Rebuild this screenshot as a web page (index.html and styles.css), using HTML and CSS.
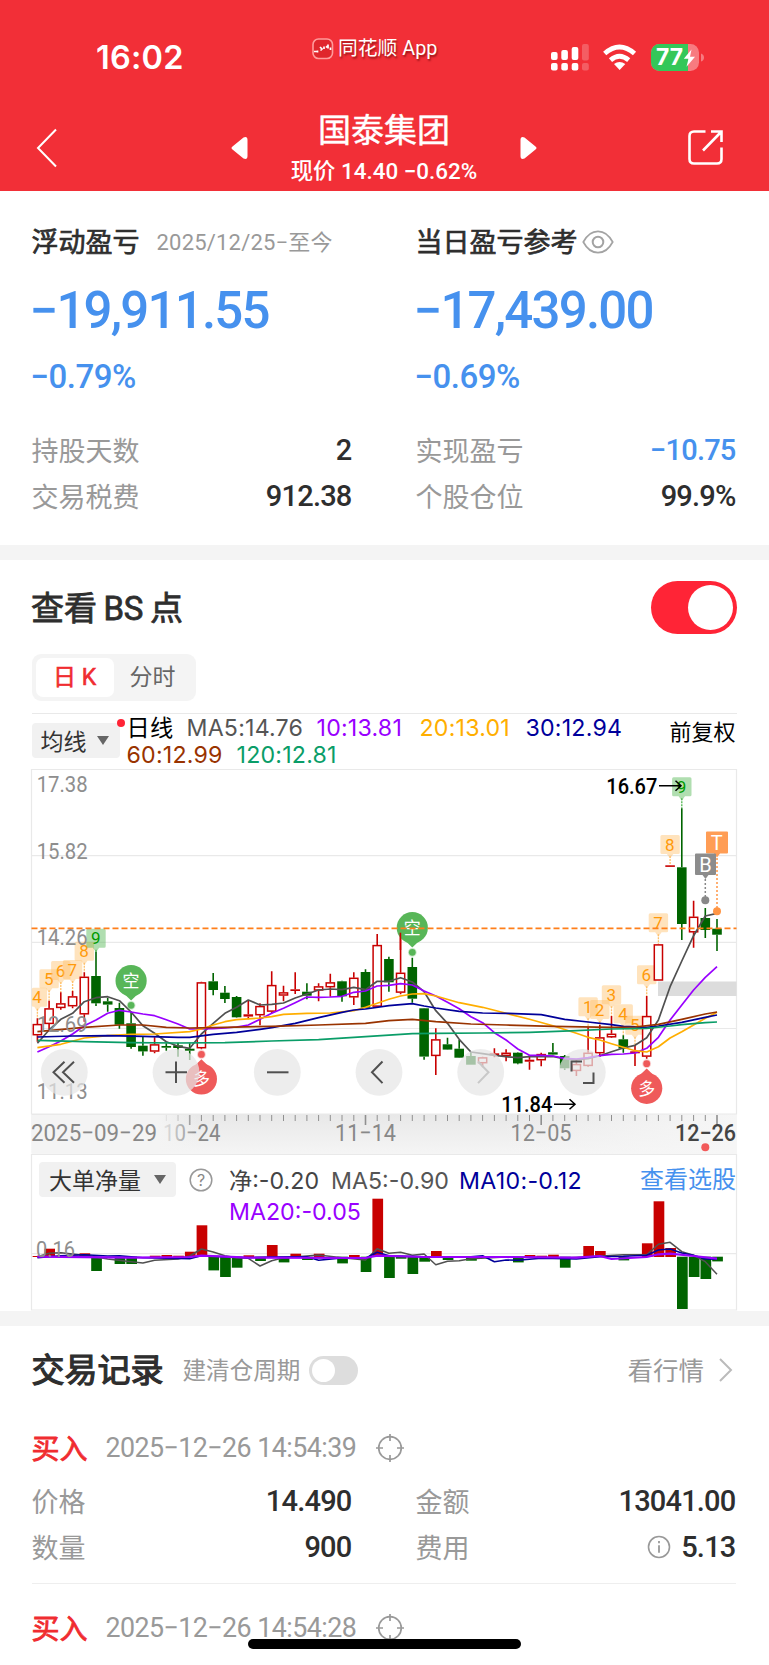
FILE: index.html
```html
<!DOCTYPE html>
<html lang="zh-CN">
<head>
<meta charset="utf-8">
<title>国泰集团</title>
<link rel="stylesheet" href="styles.css">
</head>
<body>
<header class="top">
  <div class="status">
    <div class="clock">16:02</div>
    <div class="brand">
      <svg width="22" height="22" viewBox="0 0 22 22"><rect x="1" y="1" width="19.5" height="19.5" rx="5.5" fill="#e0262c" stroke="#ff9b9b" stroke-width="1.6"/><path d="M2 13.5h3M5.5 12.5v2M8 9l2 2-1.500 1.500M12 8.500v2.500M14 9.500l1.500-1.500M16 6.500v4M18.500 9.500v2.500" stroke="#fff" stroke-width="1.700" fill="none"/></svg>
      <span>同花顺 App</span>
    </div>
    <svg class="signals" width="156" height="30" viewBox="550 43 156 30">
      <g fill="#fff"><rect x="551" y="52" width="6.600" height="8" rx="2"/><rect x="561.300" y="50" width="6.600" height="10" rx="2"/><rect x="571.700" y="47" width="6.600" height="13" rx="2"/><rect x="551" y="63" width="6.600" height="7.600" rx="2"/><rect x="561.300" y="63" width="6.600" height="7.600" rx="2"/><rect x="571.700" y="63" width="6.600" height="7.600" rx="2"/></g>
      <g fill="#fff" opacity=".22"><rect x="582" y="44" width="6.800" height="16.500" rx="2"/><rect x="582" y="63" width="6.800" height="7.600" rx="2"/></g>
      <g fill="none" stroke="#fff" stroke-width="4.800"><path d="M604.700 53.500Q619.500 40.500 634.500 53.500"/><path d="M610.500 60.100Q619.500 52.300 628.700 60.100"/></g>
      <path d="M614 64q5.500-4.200 11.300 0l-5.700 6z" fill="#fff"/>
      <rect x="651" y="44" width="48" height="27" rx="8.500" fill="#f77b80"/>
      <path d="M659.500 44H688v27h-28.500a8.500 8.500 0 0 1-8.500-8.500v-10a8.500 8.500 0 0 1 8.500-8.500z" fill="#34c759"/>
      <path d="M701 53.500q3 1 3 4t-3 4z" fill="#f77b80"/>
      <text x="656" y="65" class="batt" textLength="27" lengthAdjust="spacingAndGlyphs">77</text>
      <path d="M691.500 49.500l-7.700 9.300h4.700l-2 8 8.500-10h-5z" fill="#fff"/>
    </svg>
  </div>
  <div class="nav">
    <svg class="back" width="24" height="42" viewBox="0 0 24 42"><path d="M21 2.500L3 21l18 18.500" fill="none" stroke="#fff" stroke-width="2"/></svg>
    <svg width="17" height="24" viewBox="0 0 17 24"><path d="M1.500 10.500L12.500 1.500Q16.500 0 16.500 4v16q0 4-4 2.500L1.500 13.500q-2-1.500 0-3z" fill="#fff"/></svg>
    <div class="stock"><h1>国泰集团</h1><p>现价 14.40 −0.62%</p></div>
    <svg width="17" height="24" viewBox="0 0 17 24"><path d="M15.500 10.500L4.500 1.500Q.5 0 .5 4v16q0 4 4 2.500L15.500 13.500q2-1.500 0-3z" fill="#fff"/></svg>
    <svg class="share" width="38" height="38" viewBox="0 0 38 38"><path d="M18.500 2.500H7q-4.500 0-4.500 4.500v23q0 4.500 4.500 4.500h23q4.500 0 4.500-4.500V18.500M24 2.500h10.500V13M34 3L16 21.500" fill="none" stroke="#fff" stroke-width="2.600"/></svg>
  </div>
</header>

<section class="summary">
  <div class="col">
    <div class="head"><h2>浮动盈亏</h2><span class="range">2025/12/25−至今</span></div>
    <div class="amount">−19,911.55</div>
    <div class="percent">−0.79%</div>
    <div class="row"><span>持股天数</span><b>2</b></div>
    <div class="row"><span>交易税费</span><b>912.38</b></div>
  </div>
  <div class="col">
    <div class="head"><h2>当日盈亏参考</h2><svg width="32" height="24" viewBox="0 0 32 24" fill="none" stroke="#a3a3a3" stroke-width="1.700"><path d="M1.300 12Q7 1.300 16 1.300T30.700 12Q25 22.700 16 22.700T1.300 12z"/><circle cx="16" cy="12" r="5.300" stroke-width="2"/></svg></div>
    <div class="amount">−17,439.00</div>
    <div class="percent">−0.69%</div>
    <div class="row"><span>实现盈亏</span><b class="blue">−10.75</b></div>
    <div class="row"><span>个股仓位</span><b>99.9%</b></div>
  </div>
</section>

<section class="bs">
  <div class="bs-head"><h2>查看 BS 点</h2><span class="switch on"><i></i></span></div>
  <div class="tabs"><span class="active">日 K</span><span>分时</span></div>
  <div class="legend">
    <div class="picker">均线<i></i><em></em></div>
    <div class="values">
      <div><span class="k0">日线</span><span class="k1">MA5:14.76</span><span class="k2">10:13.81</span><span class="k3">20:13.01</span><span class="k4">30:12.94</span></div>
      <div><span class="k5">60:12.99</span><span class="k6">120:12.81</span></div>
    </div>
    <div class="adjust">前复权</div>
  </div>
  <svg id="kline" class="kline" width="769" height="385" viewBox="0 769 769 385"></svg>
  <div class="volume">
    <svg id="flow" class="flow" width="769" height="157" viewBox="0 1154 769 157"></svg>
    <div class="flow-legend">
      <div class="picker wide">大单净量<i></i></div>
      <svg width="24" height="24" viewBox="0 0 24 24"><circle cx="12" cy="12" r="10.800" fill="none" stroke="#999" stroke-width="1.500"/><text x="12" y="17.500" class="q">?</text></svg>
      <div class="values">
        <div><span class="f1">净:-0.20</span><span class="f2">MA5:-0.90</span><span class="f3">MA10:-0.12</span></div>
        <div><span class="f4">MA20:-0.05</span></div>
      </div>
      <a>查看选股</a>
    </div>
  </div>
</section>

<section class="records">
  <div class="rec-head"><h2>交易记录</h2><span class="cycle">建清仓周期</span><span class="switch off"><i></i></span><span class="quote">看行情</span><svg width="16" height="26" viewBox="0 0 16 26"><path d="M2 2l11 11L2 24" fill="none" stroke="#bbb" stroke-width="2"/></svg></div>
  <article>
    <div class="trade"><strong>买入</strong><time>2025−12−26 14:54:39</time><svg width="30" height="30" viewBox="0 0 30 30" fill="none" stroke="#999" stroke-width="1.700"><circle cx="15" cy="15" r="11.300"/><path d="M15 1v7M15 22v7M1 15h7M22 15h7"/></svg></div>
    <div class="cells">
      <div class="row"><span>价格</span><b>14.490</b></div>
      <div class="row"><span>金额</span><b>13041.00</b></div>
      <div class="row"><span>数量</span><b>900</b></div>
      <div class="row"><span>费用</span><b><svg width="24" height="24" viewBox="0 0 24 24"><circle cx="12" cy="12" r="10.500" fill="none" stroke="#999" stroke-width="1.600"/><path d="M12 6v2.200M12 10.200v7.500" stroke="#999" stroke-width="1.800"/></svg>5.13</b></div>
    </div>
  </article>
  <article class="next">
    <div class="trade"><strong>买入</strong><time>2025−12−26 14:54:28</time><svg width="30" height="30" viewBox="0 0 30 30" fill="none" stroke="#999" stroke-width="1.700"><circle cx="15" cy="15" r="11.300"/><path d="M15 1v7M15 22v7M1 15h7M22 15h7"/></svg></div>
  </article>
</section>
<div class="home"></div>
<script src="chart.js"></script>
</body>
</html>
```

FILE: styles.css
```css
* { box-sizing: border-box; }
body { margin: 0; width: 769px; height: 1665px; overflow: hidden; position: relative; background: #fff; color: #2e2e2e; font-family: Roboto, "Noto Sans CJK SC", sans-serif; }
h1, h2, p { margin: 0; font-weight: 400; }
svg { display: block; flex: none; }
i, em { font-style: normal; }
.top { height: 191px; background: #f22f37; color: #fff; }
.status { height: 100px; position: relative; }
.clock { position: absolute; left: 96px; top: 38px; font: 600 32.5px/40px Inter, sans-serif; letter-spacing: .2px; }
.brand { position: absolute; left: 312px; top: 37px; display: flex; align-items: center; gap: 4px; font-size: 19.8px; line-height: 24px; white-space: nowrap; }
.brand span { text-shadow: 1px 2px 2px rgba(90, 0, 0, .6); }
.signals { position: absolute; left: 550px; top: 43px; }
.batt { font: 700 23px Inter, sans-serif; fill: #fff; }
.nav { height: 91px; display: flex; align-items: center; padding: 4px 44px 0 35px; }
.back { margin-right: 172px; }
.stock { width: 272px; display: flex; flex-direction: column; align-items: center; white-space: nowrap; }
.stock h1 { font-size: 33px; line-height: 40px; margin-top: 2px; -webkit-text-stroke: .4px #fff; }
.stock p { font-size: 22.4px; line-height: 32px; margin-top: 4px; font-weight: 500; }
.share { margin-left: auto; }

.summary { height: 354px; display: flex; padding: 28px 33px 0 31.5px; gap: 64px; }
.col { width: 320px; }
.head { height: 45px; display: flex; align-items: center; white-space: nowrap; }
.head h2 { font-size: 27px; line-height: 45px; padding-top: 3px; -webkit-text-stroke: .7px #2e2e2e; }
.range { margin: -3px 0 0 17px; font-size: 22px; color: #999; letter-spacing: .2px; }
.head svg { margin-left: 4px; }
.amount { font-size: 51px; line-height: 60px; margin: 17px 0 0 -2px; font-weight: 500; color: #4691ee; letter-spacing: -1.8px; white-space: nowrap; }
.percent { font-size: 33px; line-height: 40px; margin: 16px 0 29px -1px; font-weight: 500; color: #4691ee; letter-spacing: -.5px; }
.row { height: 46px; display: flex; justify-content: space-between; align-items: center; font-size: 27px; color: #999; }
.row b { display: flex; align-items: center; gap: 10px; padding-top: 2px; font-size: 29px; font-weight: 500; color: #2e2e2e; letter-spacing: -.8px; }
.row b.blue { color: #4691ee; }

.bs { border-top: 15px solid #f4f4f4; border-bottom: 15px solid #f4f4f4; height: 781px; }
.bs-head { height: 95px; display: flex; justify-content: space-between; align-items: center; padding: 0 32px 0 31px; }
.bs-head h2 { font-size: 33px; padding-bottom: 4px; -webkit-text-stroke: .8px #2e2e2e; letter-spacing: -.1px; word-spacing: -1.5px; }
.switch { display: block; flex: none; padding: 4px; border-radius: 40px; }
.switch i { display: block; border-radius: 50%; background: #fff; }
.on { width: 86px; height: 53px; background: #ff2436; }
.on i { width: 45px; height: 45px; margin-left: 33px; }
.off { width: 49px; height: 29px; background: #ddd; padding: 3px; }
.off i { width: 23px; height: 23px; }
.tabs { width: 164px; height: 47px; margin: -1px 0 0 31.5px; padding: 4px; border-radius: 9px; background: #f4f4f4; display: flex; font-size: 23px; line-height: 39px; color: #666; text-align: center; }
.tabs span { width: 78px; border-radius: 7px; }
.tabs .active { background: #fff; color: #f02c30; -webkit-text-stroke: .6px #f02c30; }
.legend { margin: 12px 32px 0 31.5px; height: 56px; border-top: 1px solid #e9e9e9; display: flex; font: 23.2px/26px Inter, "Noto Sans CJK SC", sans-serif; letter-spacing: .2px; white-space: nowrap; }
.picker { position: relative; flex: none; width: 88px; height: 35px; margin-top: 9px; padding: 0 11px 0 9px; border-radius: 4px; background: #f1f1f1; color: #333; display: flex; align-items: center; justify-content: space-between; font: 23px/35px "Noto Sans CJK SC", sans-serif; letter-spacing: 0; }
.picker i { border: 6px solid transparent; border-top: 9px solid #666; border-bottom: 0; }
.picker em { position: absolute; right: -5px; top: -4px; width: 8px; height: 8px; border-radius: 50%; background: #ff2436; }
.legend .values { flex: none; width: 550px; padding-left: 7px; }
.values div { height: 27px; display: flex; align-items: center; }
.values span { flex: none; }
.k0 { width: 60px; color: #000; }
.k1 { width: 130px; color: #555; }
.k2 { width: 103px; color: #90f; }
.k3 { width: 106px; color: #ffae00; }
.k4 { color: #00009b; }
.k5 { width: 110px; color: #993300; }
.k6 { color: #0a9d68; }
.adjust { flex: none; color: #000; font-size: 22px; line-height: 36px; letter-spacing: 0; }
.kline { font-family: Roboto, "Noto Sans CJK SC", sans-serif; }
.volume { height: 157px; position: relative; }
.flow { position: absolute; left: 0; top: 0; font-family: Roboto, sans-serif; }
.flow-legend { position: relative; display: flex; padding: 8px 32px 0 39px; font: 23.2px/30px Inter, "Noto Sans CJK SC", sans-serif; white-space: nowrap; }
.wide { width: 137px; margin-top: 0; padding: 0 10px; }
.flow-legend > svg { margin: 6px 0 0 13px; }
.flow-legend .values { margin: 3px 0 0 16px; width: 411px; }
.flow-legend .values div { height: 31.5px; }
.f1 { width: 102px; color: #444; }
.f2 { width: 128px; color: #555; }
.f3 { color: #00009b; letter-spacing: .3px; }
.f4 { color: #90f; }
.flow-legend a { color: #4691ee; font-size: 24px; line-height: 36px; }
.q { font-size: 16px; fill: #888; text-anchor: middle; }

.records { padding: 0 33px 0 31.5px; }
.rec-head { height: 88px; display: flex; align-items: center; white-space: nowrap; color: #999; }
.rec-head h2 { font-size: 33px; padding-bottom: 4px; color: #2e2e2e; -webkit-text-stroke: 1.2px #2e2e2e; }
.cycle { font-size: 23.6px; margin: -3px 9px 0 19px; }
.quote { font-size: 25.5px; margin: -3px 14px 0 auto; }
.rec-head svg { margin-right: 2px; }
article { height: 170px; border-bottom: 1px solid #eee; }
.trade { height: 63px; padding-top: 5px; display: flex; align-items: center; white-space: nowrap; }
.trade strong { font-weight: 400; font-size: 28px; color: #f02c30; -webkit-text-stroke: .8px #f02c30; width: 74px; padding-bottom: 3px; }
.trade time { font-size: 26.8px; color: #999; width: 252px; letter-spacing: -.55px; }
.trade svg { margin-left: 17.5px; }
.cells { display: grid; grid-template-columns: 320px 320px; column-gap: 64px; }
.next { height: 82px; border: 0; padding-top: 10px; }
.home { position: absolute; left: 248px; top: 1639px; width: 273px; height: 10px; border-radius: 5px; background: #000; }

.ylab { font-size: 22.5px; fill: #8e8e8e; }
.date { font-size: 24px; fill: #888; }
.mark { font-size: 22.5px; fill: #000; font-weight: 500; }
.tag { font-size: 17px; text-anchor: middle; }
.pin { font-size: 17px; text-anchor: middle; fill: #fff; }
```

FILE: chart.js
```js
const X = i => 37.4 + 11.717 * i;
const Y = v => 760 + v / 3;
const r1 = n => n.toFixed(1);
const RED = '#c80000', GREEN = '#006400';

/* direction, high, body top, body bottom, low (third-pixels below the plot origin) */
const candles = `r 775 792 826 845|r 722 745 792 808|r 697 730 744 749|r 693 709 739 745|r 637 650 763 785|g 575 648 730 738|g 714 724 734 755|g 728 744 794 806|g 755 790 861 866|g 828 857 874 887|r 832 853 875 880|g 850 858 863 872|g 848 856 864 890|g 850 866 872 900|r 665 667 865 868|g 639 664 690 706|g 678 698 717 729|g 708 711 772 773|r 722 763 770 778|r 730 738 766 796|r 634 675 755 760|r 677 697 707 724|r 637 688 693 702|g 670 695 707 718|r 670 679 692 724|r 641 667 682 710|g 662 664 709 725|r 637 653 712 735|g 628 636 743 745|r 522 555 740 742|g 590 597 667 695|r 518 638 698 703|g 593 621 716 728|g 744 745 890 899|r 805 838 888 945|g 833 853 869 870|g 840 866 893 894|g 876 888 914 914|r 890 892 910 922|r 865 880 886 892|r 868 878 888 904|g 877 878 910 913|r 885 899 905 929|r 878 882 901 919|g 849 877 884 886|g 885 888 925 930|r 900 912 933 948|r 802 878 918 920|r 795 832 880 890|r 768 821 832 834|g 826 838 866 878|r 855 874 880 918|r 708 768 890 896|r 552 553 662 662|r 316 316 320 320|g 145 322 492 540|r 422 470 517 563|g 444 474 510 534|g 477 506 524 573`.split('|').map(s => s.split(' '));

const averages = {
  '#505050': '0:850,1:810,2:778,3:760,4:725,5:713,6:710,7:722,8:756,9:797,10:820,11:845,12:859,13:865,14:822,15:790,16:760,17:742,18:720,19:735,20:733,21:729,22:714,23:702,24:690,25:687,26:689,27:682,28:689,29:664,30:664,31:653,32:666,33:695,34:752,35:790,36:838,37:876,38:881,39:886,40:890,41:893,42:890,43:890,44:889,45:897,46:899,47:896,48:887,49:875,50:864,51:856,52:833,53:780,54:680,55:603,56:527,57:468,58:460',
  '#9900ff': '0:876,1:860,2:843,3:822,4:797,5:780,6:760,7:751,8:756,9:762,10:767,11:779,12:792,13:807,14:807,15:806,16:804,17:801,18:795,19:778,20:760,21:745,22:728,23:711,24:712,25:711,26:709,27:697,28:693,29:678,30:676,31:671,32:675,33:693,34:708,35:727,36:746,37:770,38:788,39:818,40:840,41:867,42:886,43:886,44:888,45:895,46:897,47:893,48:887,49:883,50:882,51:879,52:865,53:832,54:780,55:735,56:690,57:652,58:620',
  '#ffae00': '0:863,2:853,4:834,6:827,8:823,10:822,13:815,14:807,15:795,16:785,17:779,19:774,20:770,21:763,23:760,25:759,27:752,28:742,30:718,31:708,32:702,33:701,34:708,36:728,38:742,40:760,42:778,44:797,46:820,47:832,48:840,49:851,50:862,51:872,52:876,53:860,54:834,55:815,56:795,57:775,58:757',
  '#000099': '0:831,3:828,6:827,9:829,12:832,13:832,15:823,17:817,19:808,20:803,22:790,24:773,26:757,27:750,28:747,30:737,32:731,33:738,34:744,36:754,38:759,40:760,43:764,45:778,47:786,49:794,50:799,52:802,53:798,55:787,57:772,58:765',
  '#993300': '0:815,4:802,7:795,9:795,11:802,13:804,16:802,20:799,24:795,28:790,30:782,32:778,34:785,37:792,40:795,44:799,49:802,51:801,53:793,55:778,57:762,58:756',
  '#0a9d68': '0:841,4:845,8:848,12:849,16:848,20:843,24:839,28:830,32:821,34:820,38:819,42:817,46:812,49:807,52:805,54:798,55:794,57:788,58:786'
};

const polyline = (data, y, color, w) => {
  const pts = data.split(',').map(p => p.split(':')).map(([i, v]) => r1(X(+i)) + ',' + r1(y(+v))).join(' ');
  return `<polyline points="${pts}" fill="none" stroke="${color}" stroke-width="${w}" stroke-linejoin="round"/>`;
};
const label = (cls, x, y, w, s, extra = '') => `<text class="${cls}" x="${x}" y="${y}" textLength="${w}" lengthAdjust="spacingAndGlyphs" ${extra}>${s}</text>`;

let k = '<defs><linearGradient id="strip" x2="0" y2="1"><stop offset="0" stop-color="#e8e8e8"/><stop offset="1" stop-color="#f5f5f5"/></linearGradient><linearGradient id="shade"><stop offset="0" stop-color="#f4f4f4"/><stop offset=".76" stop-color="#f4f4f4"/><stop offset="1" stop-color="#f4f4f4" stop-opacity="0"/></linearGradient><linearGradient id="shadeR"><stop offset="0" stop-color="#f6f6f6" stop-opacity="0"/><stop offset="1" stop-color="#f6f6f6"/></linearGradient></defs>';
k += '<rect x="31.5" y="1114" width="705" height="40" fill="url(#strip)"/><rect x="500" y="1114" width="237" height="40" fill="url(#shadeR)"/><path d="M31.500 769.500H736.500V1114H31.500zM31.500 855.700H736.500M31.500 942.300H736.500M31.500 1028.500H736.500" fill="none" stroke="#e9e9e9" stroke-width="1.2"/>';
k += '<rect x="658" y="981.500" width="78.500" height="14.500" fill="#dcdcdc"/>';

/* counter tags with their pointers: index, number, top, dotted line end, colour pair */
const tags = [[0,4,683,775,'y'],[1,5,628,722,'y'],[2,6,603,697,'y'],[3,7,600,693,'y'],[4,8,545,637,'y'],[5,9,506,575,'g'],[47,1,712,802,'y'],[48,2,720,800,'y'],[49,3,676,768,'y'],[50,4,733,826,'y'],[51,5,767,855,'y'],[52,6,616,708,'y'],[53,7,460,552,'y'],[54,8,225,316,'y'],[55,9,52,145,'g']];
for (const [i, n, t, e, c] of tags) {
  const x = X(i), y = Y(t), bg = c === 'y' ? '#ffc069' : '#4cb34c', fg = c === 'y' ? '#ff9a0a' : '#009a00';
  const left = Math.max(x - 9.7, 31.8), w = x + 9.7 - left;
  k += `<path d="M${r1(left)} ${r1(y + 1.5)}q0-1.500 1.500-1.500h${r1(w - 3)}q1.500 0 1.500 1.500v16q0 1.500-1.500 1.500h-5l-3.200 4.500-3.200-4.500H${r1(left + 1.5)}q-1.500 0-1.500-1.500z" fill="${bg}" opacity=".44"/>`;
  k += `<path d="M${r1(x)} ${r1(y + 21)}V${r1(Y(e))}" stroke="${bg}" stroke-width="1.300" stroke-dasharray="2 1"/><text class="tag" x="${r1(x - .3)}" y="${r1(y + 15.7)}" fill="${fg}">${n}</text>`;
}
candles.forEach(([c, h, t, b, l], i) => {
  const col = c === 'r' ? RED : GREEN, x = X(i), top = Y(+t), bot = Y(+b);
  k += `<path d="M${r1(x)} ${r1(Y(+h))}V${r1(top)}M${r1(x)} ${r1(bot)}V${r1(Y(+l))}" stroke="${col}" stroke-width="1.600"/>`;
  if (c === 'g' || b - t < 9) k += `<rect x="${r1(x - 4.8)}" y="${r1(top)}" width="9.600" height="${r1(Math.max(1.6, bot - top))}" fill="${col}"/>`;
  else k += `<rect x="${r1(x - 4.1)}" y="${r1(top + .6)}" width="8.200" height="${r1(bot - top - 1.2)}" fill="#fff" stroke="${col}" stroke-width="1.500"/>`;
});
for (const c in averages) k += polyline(averages[c], Y, c, 1.7);

const pin = (i, cy, up, color, s) => {
  const x = X(i), y = Y(cy), d = up ? -1 : 1;
  return `<circle cx="${r1(x)}" cy="${r1(y)}" r="15.600" fill="${color}"/><path d="M${r1(x - 6.5)} ${r1(y + 13.5 * d)}L${r1(x)} ${r1(y + 19.8 * d)}L${r1(x + 6.5)} ${r1(y + 13.5 * d)}z" fill="${color}"/><circle cx="${r1(x)}" cy="${r1(y + 24.6 * d)}" r="3.400" fill="${color}" stroke="${color}" stroke-opacity=".3" stroke-width="2"/><text class="pin" x="${r1(x)}" y="${r1(y + 6.3)}">${s}</text>`;
};
k += pin(8, 662, false, '#58b658', '空') + pin(32, 503, false, '#58b658', '空') + pin(14, 957, true, '#ef5a5a', '多') + pin(52, 985, true, '#ef5a5a', '多');
k += '<path d="M31.500 928.400H736.500" stroke="#ff7f1a" stroke-width="1.600" stroke-dasharray="6 3"/><path d="M400.400 932.700V950" stroke="#c80000" stroke-width="1.600"/>';
k += '<g stroke-width="1.500" stroke-dasharray="2 2"><path d="M705.300 875V897" stroke="#888"/><path d="M717 854V909" stroke="#ff9544"/></g><circle cx="705.300" cy="900.300" r="4" fill="#888"/><circle cx="717" cy="911.300" r="4" fill="#ff9544"/>';
k += '<path d="M707 831.500h20q1 0 1 1v20q0 1-1 1h-7l-3 4-3-4h-7q-1 0-1-1v-20q0-1 1-1z" fill="#ff9d55"/><text class="pin" style="font-size:20px" x="716.800" y="850">T</text>';
k += '<path d="M696 853.500h19q1 0 1 1v19.500q0 1-1 1h-6.500l-3 4-3-4h-6.500q-1 0-1-1v-19.500q0-1 1-1z" fill="#8c8c8c"/><text class="pin" style="font-size:20px" x="705.500" y="871.500">B</text>';

[['17.38', 792], ['15.82', 858.7], ['14.26', 945], ['12.69', 1031.7], ['11.13', 1099]].forEach(([s, y]) => { k += label('ylab', 36.7, y, 51, s); });
k += label('mark', 606.3, 794, 51, '16.67') + label('mark', 501.3, 1112, 51, '11.84');
k += '<path d="M659 785.700H681M675.500 780.700L681 785.700L675.500 790.700M554 1104.300H575M569.500 1099.300L575 1104.300L569.500 1109.300" fill="none" stroke="#000" stroke-width="1.500"/>';

/* round control buttons */
const glyphs = ['M52.500 1072.300m12-10.500l-11 10.500 11 10.500M74 1061.800l-11 10.500 11 10.500', 'M165.500 1072.300h21.500M176 1061.500v21.500', 'M267 1072.300h21.500', 'M382.500 1061.500l-10.500 10.800 10.500 10.800', 'M478 1061.500l10.500 10.800-10.500 10.800', 'M571.500 1071.500v-10h10.500M583 1083h10.500v-10.500'];
[64.3, 176, 277.3, 379, 480.7, 582.3].forEach((x, i) => {
  k += `<circle cx="${x}" cy="1072.300" r="23.400" fill="#e6e6e6" opacity=".72"/><path d="${glyphs[i]}" fill="none" stroke="${i === 4 ? '#c8c8c8' : '#505050'}" stroke-width="2"/>`;
});

/* time axis */
for (let i = 11; i < 59; i++) {
  const major = (i - 13) % 15 === 0;
  k += `<path d="M${r1(X(i))} 1115v${major ? 10 : 6}" stroke="#909090" stroke-width="${major ? 1.600 : 1}"/>`;
}
k += label('date', 163, 1141, 57.500, '10−24') + '<rect x="31.500" y="1115" width="166" height="38" fill="url(#shade)"/>';
k += label('date', 31, 1141, 126, '2025−09−29') + label('date', 335, 1141, 61, '11−14') + label('date', 510.500, 1141, 61, '12−05') + label('date', 675, 1141, 61, '12−26', 'style="fill:#444;font-weight:500"');
k += '<circle cx="705.300" cy="1147.300" r="4" fill="#f25a5a"/>';
document.getElementById('kline').innerHTML = k;

/* net large-order flow */
const V = v => 1110 + v / 3;
const bars = '0:438,1:416,3:437,4:430,5:483,7:462,8:462,10:437,11:435,12:437,13:425,14:346,15:481,16:501,17:473,18:436,19:453,20:405,21:457,22:431,23:450,24:431,26:460,27:435,28:486,29:266,30:504,31:446,32:492,33:455,34:423,35:450,37:452,41:457,42:435,43:437,44:434,45:473,47:408,48:423,50:451,52:400,53:274,54:414,55:597,56:501,57:507,58:454';
let f = '<path d="M31.500 1154.500H736.500V1310H31.500zM31.500 1253.700H736.500" fill="none" stroke="#e9e9e9" stroke-width="1.200"/>';
bars.split(',').map(b => b.split(':').map(Number)).forEach(([i, v]) => {
  const top = V(Math.min(v, 440)), h = V(Math.max(v, 441)) - top;
  f += `<rect x="${r1(X(i) - 4.8)}" y="${r1(top)}" width="10.700" height="${r1(h)}" fill="${v < 440 ? RED : GREEN}"/>`;
});
f += polyline('0:440,1:430,2:428,3:432,4:436,5:441,6:447,8:455,9:459,10:451,12:447,13:438,14:417,15:426,16:437,17:443,18:445,19:468,20:452,21:443,23:438,24:435,26:443,28:450,29:416,30:430,31:427,32:436,33:432,34:464,35:454,36:452,37:446,40:441,45:444,47:440,50:434,52:434,53:403,54:397,55:425,56:436,57:455,58:493', V, '#505050', 1.5);
f += polyline('0:443,2:437,4:434,6:438,7:437,9:443,13:446,14:437,16:440,18:443,20:441,23:440,24:451,26:444,28:445,29:427,30:437,33:440,37:440,38:437,39:455,40:450,41:451,43:445,46:447,48:440,50:439,52:436,53:420,54:417,55:429,56:436,57:447,58:448', V, '#000099', 1.6);
f += polyline('0:440,8:443,13:441,14:437,18:443,28:444,29:437,33:441,40:441,46:443,48:438,49:447,52:441,53:433,54:431,56:438,58:446', V, '#9900ff', 2.2);
f += label('ylab', 36, 1257, 39, '0.16');
document.getElementById('flow').innerHTML = f;
```
